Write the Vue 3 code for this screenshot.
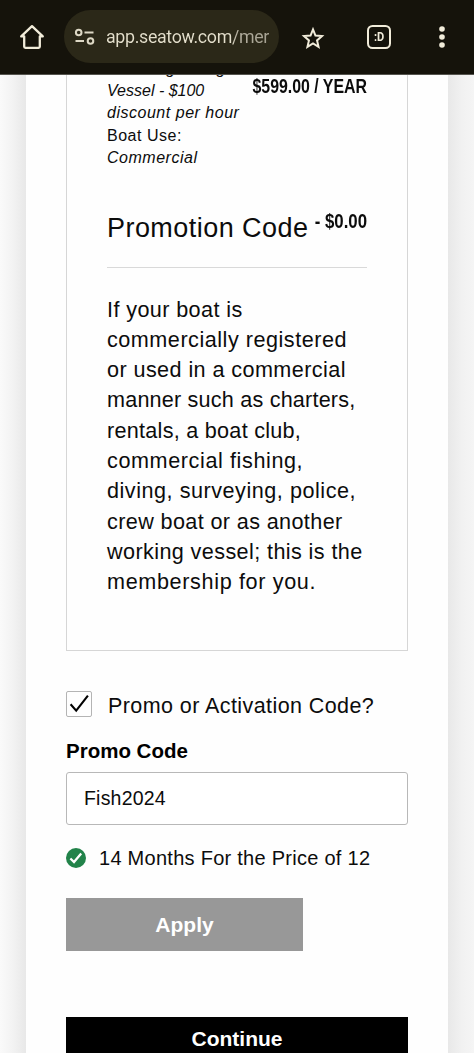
<script setup>
import { ref } from 'vue'

const lines = [
  { text: 'If your boat is', spacing: 0.4 },
  { text: 'commercially registered', spacing: 0.52 },
  { text: 'or used in a commercial', spacing: 0.42 },
  { text: 'manner such as charters,', spacing: 0.2 },
  { text: 'rentals, a boat club,', spacing: 0.27 },
  { text: 'commercial fishing,', spacing: 0.6 },
  { text: 'diving, surveying, police,', spacing: 0.53 },
  { text: 'crew boat or as another', spacing: 0.38 },
  { text: 'working vessel; this is the', spacing: 0.4 },
  { text: 'membership for you.', spacing: 0.65 },
]
const code = ref('Fish2024')
</script>

<template>
  <div class="screen">
    <header class="toolbar">
      <svg class="home" viewBox="0 0 26 26" fill="none" stroke="#f1ecda" stroke-width="2.3" stroke-linejoin="round" stroke-linecap="round">
        <path d="M13 2.2 2.2 12.4H5.2V22.6Q5.2 23.8 6.4 23.8H19.6Q20.8 23.8 20.8 22.6V12.4H23.8Z" />
      </svg>
      <div class="pill">
        <svg class="tune" viewBox="0 0 22 18" fill="none" stroke="#ddd8c5" stroke-width="2">
          <circle cx="4.7" cy="4.5" r="2.8" />
          <path d="M10.5 4.5H19.5M1.5 13H10" />
          <circle cx="16.5" cy="13" r="2.8" />
        </svg>
        <span class="url">app.seatow.com/mer</span>
      </div>
      <svg class="star" viewBox="0 0 24 24" fill="none" stroke="#f1ecda" stroke-width="2" stroke-linejoin="miter">
        <path d="M12 3.4 14.45 9.5 21 10.05 16.05 14.4 17.55 20.8 12 17.4 6.45 20.8 7.95 14.4 3 10.05 9.55 9.5Z" />
      </svg>
      <div class="tabs"><span>:D</span></div>
      <svg class="dots" viewBox="0 0 6 24" fill="#f1ecda">
        <circle cx="3" cy="4" r="2.8" /><circle cx="3" cy="12" r="2.8" /><circle cx="3" cy="20" r="2.8" />
      </svg>
    </header>

    <div class="page">
      <main class="sheet">
        <section class="card">
          <div class="plan">
            <div class="details">
              <em>Assisting Going<br /><span class="tight">Vessel - $100</span><br />discount per hour</em><br />Boat Use:<br /><em>Commercial</em>
            </div>
            <strong class="price year">$599.00 / YEAR</strong>
          </div>
          <div class="promo">
            <h2>Promotion Code</h2>
            <strong class="price zero">- $0.00</strong>
          </div>
          <p class="about">
            <span v-for="line in lines" :key="line.text" :style="{ letterSpacing: line.spacing + 'px' }">{{ line.text }}</span>
          </p>
        </section>

        <div class="check-row">
          <span class="box">
            <svg viewBox="0 0 26 26" fill="none" stroke="#000" stroke-width="2.1"><path d="M4.6 13.3 10.2 19.7 21.9 4.6" /></svg>
          </span>
          <span class="check-label">Promo or Activation Code?</span>
        </div>

        <label class="field-label" for="code">Promo Code</label>
        <input id="code" v-model="code" class="field" type="text" />

        <div class="valid">
          <svg viewBox="0 0 20 20"><circle cx="10" cy="10" r="10" fill="#22834a" /><path d="M4.4 10.5 8 14 15.2 5.6" fill="none" stroke="#fff" stroke-width="2.3" /></svg>
          <span>14 Months For the Price of 12</span>
        </div>

        <button class="apply">Apply</button>
        <button class="continue">Continue</button>
      </main>
    </div>
  </div>
</template>

<style>
body {
  margin: 0;
  overflow: hidden;
}
</style>

<style scoped>
* {
  box-sizing: border-box;
}
.screen {
  width: 474px;
  height: 1053px;
  overflow: hidden;
  display: flex;
  flex-direction: column;
  font-family: "Liberation Sans", Arial, sans-serif;
  color: #0c0c0c;
  background: #fff;
}
.toolbar {
  flex: none;
  height: 75px;
  display: flex;
  align-items: center;
  padding: 0 0 1px 19px;
  background: #15130b;
  border-bottom: 1px solid #55544e;
}
.home {
  width: 26px;
  height: 26px;
}
.pill {
  width: 215px;
  height: 53px;
  margin-left: 19px;
  padding-left: 10px;
  border-radius: 27px;
  background: #2b2818;
  display: flex;
  align-items: center;
}
.tune {
  width: 22px;
  height: 18px;
  margin-top: 1px;
}
.url {
  margin: 1px 0 0 10px;
  font: 17.8px/26px Roboto, sans-serif;
  letter-spacing: -0.32px;
  width: 165px;
  white-space: nowrap;
  color: transparent;
  background: linear-gradient(90deg, #e4dfcc 76%, #b5b0a0 79%, #a39f90 100%);
  background-clip: text;
}
.star {
  width: 24px;
  height: 24px;
  margin: 2px 0 0 22px;
}
.tabs {
  width: 24px;
  height: 24px;
  margin-left: 42px;
  border: 2.2px solid #f1ecda;
  border-radius: 5.5px;
  display: flex;
  align-items: center;
  justify-content: center;
  color: #f1ecda;
  font: bold 13px/14px Roboto, sans-serif;
}
.tabs span {
  transform: scaleX(0.85);
}
.dots {
  width: 6px;
  height: 24px;
  margin-left: 48px;
}
.page {
  height: 978px;
  padding: 0 26px;
  background: linear-gradient(90deg, #fafafa 0, #f3f3f3 12px, #e8e8e8 26px, #e8e8e8 448px, #f1f1f1 462px, #f5f5f5 474px);
}
.sheet {
  width: 422px;
  height: 978px;
  overflow: hidden;
  padding: 0 40px;
  background: #fefefe;
}
.card {
  height: 576px;
  border: 1px solid #d6d6d6;
  border-top: 0;
  padding: 0 40px;
}
.plan {
  height: 130px;
  display: flex;
  justify-content: space-between;
}
.details {
  flex: none;
  width: 140px;
  margin-top: -17.5px;
  font-size: 16px;
  line-height: 22.35px;
  letter-spacing: 0.52px;
  white-space: nowrap;
}
.tight {
  letter-spacing: 0;
}
.price {
  font-size: 20.5px;
  line-height: 24px;
  white-space: nowrap;
  flex: none;
  width: 0;
  display: flex;
  justify-content: flex-end;
  transform-origin: right center;
}
.year {
  margin-top: -1px;
  transform: scaleX(0.775);
}
.zero {
  margin-top: 4px;
  transform: scaleX(0.82);
}
.promo {
  height: 63px;
  display: flex;
  justify-content: space-between;
  border-bottom: 1px solid #d9d9d9;
}
h2 {
  margin: 7px 0 0;
  font-size: 27px;
  line-height: 33px;
  font-weight: 400;
  letter-spacing: 0.45px;
  white-space: nowrap;
}
.about {
  margin: 26.5px 0 0;
  font-size: 21.6px;
  line-height: 30.29px;
  white-space: nowrap;
}
.about span {
  display: block;
}
.check-row {
  height: 27px;
  margin-top: 40px;
  display: flex;
}
.box {
  width: 26px;
  height: 26px;
  border: 1.5px solid #b4b4b4;
  border-radius: 2px;
  display: flex;
  align-items: center;
  justify-content: center;
}
.box svg {
  width: 26px;
  height: 26px;
  flex: none;
}
.check-label {
  margin-left: 16px;
  margin-top: 2px;
  font-size: 21.5px;
  line-height: 27px;
  letter-spacing: 0.42px;
  white-space: nowrap;
}
.field-label {
  display: block;
  margin-top: 19px;
  font-size: 20.5px;
  line-height: 28px;
  font-weight: 700;
  color: #000;
}
.field {
  display: block;
  width: 342px;
  height: 53px;
  margin-top: 7px;
  padding: 0 17px;
  border: 1.5px solid #b8b8b8;
  border-radius: 3px;
  background: #fff;
  color: #0c0c0c;
  font: 19.5px "Liberation Sans", Arial, sans-serif;
  letter-spacing: 0.2px;
}
.valid {
  height: 28px;
  margin-top: 19px;
  display: flex;
  align-items: center;
  gap: 13px;
  font-size: 20px;
  line-height: 28px;
  letter-spacing: 0.27px;
  white-space: nowrap;
}
.valid svg {
  width: 20px;
  height: 20px;
}
button {
  display: block;
  border: 0;
  padding: 0;
  color: #fff;
  font: bold 21px/28px "Liberation Sans", Arial, sans-serif;
}
.apply {
  width: 237px;
  height: 53px;
  margin-top: 26px;
  background: #989898;
}
.continue {
  width: 342px;
  height: 53px;
  margin-top: 66px;
  padding-bottom: 9px;
  background: #000;
}
</style>
